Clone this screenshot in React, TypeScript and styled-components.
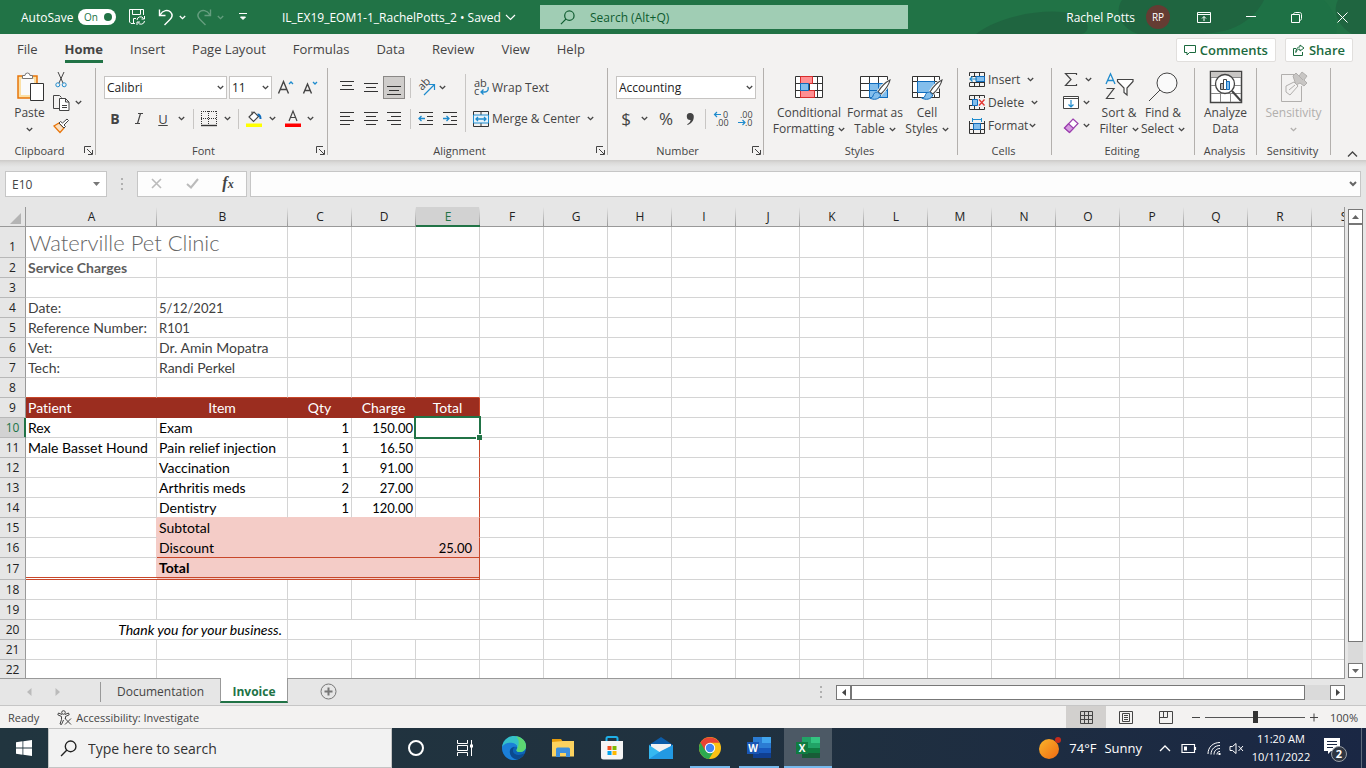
import React, { useEffect, useState } from "react";
import styled, { createGlobalStyle, css } from "styled-components";

const GREEN = "#217346";
const INK = "#444444";
const BLUE = "#1e8bcd";

const Global = createGlobalStyle`
  *, *::before, *::after { box-sizing: border-box; }
  body { margin: 0; font-family: "Open Sans", "Noto Sans", sans-serif; font-size: 12px; color: ${INK}; }
  button, input, select { font: inherit; color: inherit; margin: 0; }
  button { background: none; border: 0; padding: 0; cursor: pointer; }
  svg { display: block; flex: none; overflow: visible; }
`;

const Frame = styled.div`
  display: flex;
  flex-direction: column;
  height: 100vh;
  background: #e6e6e6;
  overflow: hidden;
`;

/* ---------- title bar ---------- */
const TitleBar = styled.header`
  position: relative;
  display: flex;
  align-items: center;
  flex: none;
  height: 34px;
  background: ${GREEN};
  color: #fff;
`;
const TitleArt = styled.svg`
  position: absolute;
  top: 0;
  right: 0;
`;
const TitleLeft = styled.div`
  display: flex;
  align-items: center;
  flex: 0 0 540px;
  padding-left: 21px;
`;
const AutoSave = styled.label`
  display: flex;
  align-items: center;
  width: 107px;
  justify-content: space-between;
  padding-right: 12px;
`;
const Switch = styled.span`
  position: relative;
  display: flex;
  align-items: center;
  width: 38px;
  height: 16px;
  padding-left: 6px;
  border-radius: 8px;
  background: #fff;
  color: ${GREEN};
  font-size: 10px;
  &::after {
    content: "";
    position: absolute;
    right: 4px;
    width: 8px;
    height: 8px;
    border-radius: 50%;
    background: ${GREEN};
  }
  input { position: absolute; inset: 0; opacity: 0; margin: 0; width: 100%; height: 100%; }
`;
const TitleBtn = styled.button<{ $w: number; $dim?: boolean }>`
  position: relative;
  display: flex;
  align-items: center;
  justify-content: center;
  width: ${(p) => p.$w}px;
  height: 34px;
  opacity: ${(p) => (p.$dim ? 0.3 : 1)};
`;
const DocTitle = styled.button`
  display: flex;
  align-items: center;
  gap: 4px;
  margin-left: 31px;
  white-space: nowrap;
`;
const SearchBox = styled.label`
  display: flex;
  align-items: center;
  flex: 0 1 368px;
  gap: 15px;
  height: 24px;
  padding-left: 20px;
  background: #a0cdb4;
  color: #0f5c30;
  input { flex: 1; min-width: 0; border: 0; background: none; outline: 0; padding: 0; }
  input::placeholder { color: #0f5c30; opacity: 1; }
`;
const TitleRight = styled.div`
  position: relative;
  display: flex;
  align-items: center;
  margin-left: auto;
`;
const Avatar = styled.span`
  display: flex;
  align-items: center;
  justify-content: center;
  width: 24px;
  height: 24px;
  margin: 0 11px;
  border-radius: 50%;
  background: #653c33;
  font-size: 10px;
`;

/* ---------- ribbon tabs ---------- */
const TabBar = styled.nav`
  display: flex;
  align-items: center;
  flex: none;
  height: 32px;
  padding: 0 13px 0 17px;
  gap: 27px;
  background: #f3f2f1;
  font-size: 13px;
`;
const RibbonTab = styled.button<{ $on?: boolean }>`
  height: 26px;
  padding-top: 1px;
  border-bottom: 3px solid ${(p) => (p.$on ? GREEN : "transparent")};
  font-weight: ${(p) => (p.$on ? 700 : 400)};
  white-space: nowrap;
`;
const TabActions = styled.div`
  display: flex;
  gap: 9px;
  margin-left: auto;
`;
const ActionBtn = styled.button`
  display: flex;
  align-items: center;
  gap: 4px;
  height: 24px;
  padding: 0 7px;
  border: 1px solid #e1dfdd;
  border-radius: 2px;
  background: #fff;
  color: #1b6a3e;
  font-weight: 600;
`;

/* ---------- ribbon ---------- */
const Ribbon = styled.section`
  display: flex;
  flex: none;
  height: 94px;
  background: #f3f2f1;
`;
const Group = styled.section<{ $w: number }>`
  position: relative;
  display: flex;
  flex-direction: column;
  flex: 0 0 ${(p) => p.$w}px;
  &::after {
    content: "";
    position: absolute;
    right: 0;
    top: 2px;
    bottom: 5px;
    width: 1px;
    background: #b3b0ad;
  }
`;
const GroupBody = styled.div<{ $pl?: number }>`
  display: flex;
  flex: 1;
  padding-left: ${(p) => p.$pl ?? 0}px;
`;
const GroupFoot = styled.footer`
  display: flex;
  align-items: center;
  height: 18px;
  padding: 0 3px 2px 0;
  font-size: 11px;
  span { flex: 1; text-align: center; }
`;
const Launcher = styled.button`
  width: 14px;
  height: 12px;
  display: flex;
  align-items: center;
  justify-content: flex-end;
`;
const Rows = styled.div`
  display: flex;
  flex-direction: column;
  gap: 8px;
  padding-top: 10px;
`;
const Row = styled.div`
  display: flex;
  align-items: center;
  height: 23px;
`;
const SmallStack = styled.div<{ $w?: number }>`
  display: flex;
  flex-direction: column;
  padding-top: 2px;
  width: ${(p) => (p.$w ? p.$w + "px" : "auto")};
`;
const Tool = styled.button<{ $w: number; $on?: boolean; $fs?: number }>`
  display: flex;
  align-items: center;
  justify-content: center;
  flex: none;
  width: ${(p) => p.$w}px;
  height: 23px;
  font-size: ${(p) => p.$fs ?? 14}px;
  ${(p) => p.$on && css`background: #cfcdcb; border: 1px solid #8a8886;`}
`;
const TextTool = styled.button`
  display: flex;
  align-items: center;
  gap: 3px;
  height: 23px;
  white-space: nowrap;
`;
const Spacer = styled.span<{ $w: number }>`
  flex: 0 0 ${(p) => p.$w}px;
`;
const Sep = styled.span<{ $m?: number; $r?: number; $tall?: boolean }>`
  flex: 0 0 1px;
  height: ${(p) => (p.$tall ? 58 : 20)}px;
  margin: ${(p) => (p.$tall ? "8px" : "0")} ${(p) => p.$r ?? p.$m ?? 3}px 0 ${(p) => p.$m ?? 3}px;
  background: #c8c6c4;
`;
const BigBtn = styled.button<{ $w: number; $off?: boolean }>`
  display: flex;
  flex-direction: column;
  align-items: center;
  flex: none;
  width: ${(p) => p.$w}px;
  color: ${(p) => (p.$off ? "#b1afad" : INK)};
  line-height: 16px;
`;
const BigIcon = styled.span`
  display: flex;
  align-items: center;
  justify-content: center;
  height: 34px;
  margin: 4px 0 1px;
`;
const BigLine = styled.span`
  display: flex;
  align-items: center;
  gap: 4px;
  height: 16px;
  white-space: nowrap;
`;
const Drop = styled.span<{ $w: number }>`
  position: relative;
  display: block;
  flex: none;
  width: ${(p) => p.$w}px;
  height: 23px;
  margin-right: 2px;
  select {
    appearance: none;
    width: 100%;
    height: 100%;
    padding: 0 14px 0 2px;
    border: 1px solid #c6c4c2;
    border-radius: 0;
    background: #fff;
    color: #222;
    outline: 0;
  }
  svg { position: absolute; right: 3px; top: 9px; pointer-events: none; }
`;
const Collapse = styled.button`
  align-self: flex-end;
  margin: 0 8px 2px auto;
`;

/* ---------- formula bar ---------- */
const FormulaBar = styled.section`
  display: flex;
  flex: none;
  height: 47px;
  padding: 11px 5px 10px;
  background: linear-gradient(#cccac8 0, #dcdbda 3px, #e6e6e6 7px);
`;
const NameBox = styled.div`
  display: flex;
  align-items: center;
  width: 102px;
  padding-right: 6px;
  border: 1px solid #c6c6c6;
  background: #fff;
  input { flex: 1; min-width: 0; border: 0; padding: 0 0 0 6px; outline: 0; background: none; }
`;
const Dots = styled.span`
  display: flex;
  flex-direction: column;
  justify-content: center;
  gap: 3px;
  width: 30px;
  align-items: center;
  i { width: 2px; height: 2px; background: #b0b0b0; }
`;
const FxBox = styled.div`
  display: flex;
  width: 110px;
  border: 1px solid #c6c6c6;
  background: #fdfdfd;
  margin-right: 3px;
  em { font: italic 600 16px/20px "Liberation Serif", serif; }
  small { font-size: 12px; }
`;
const FormulaInput = styled.div`
  display: flex;
  align-items: center;
  flex: 1;
  padding-right: 3px;
  border: 1px solid #c6c6c6;
  background: #fdfdfd;
  input { flex: 1; min-width: 0; border: 0; outline: 0; background: none; padding: 0 4px; }
`;

/* ---------- sheet ---------- */
const Sheet = styled.main`
  display: flex;
  flex: 1 1 0;
  min-height: 0;
`;
const GridWrap = styled.div`
  flex: 1;
  min-width: 0;
  overflow: hidden;
  background: #fff;
  border-right: 1px solid #999;
`;
const Grid = styled.table`
  table-layout: fixed;
  width: 100%;
  border-collapse: separate;
  border-spacing: 0;
  background: #fff;
  font-family: Lato, "Open Sans", sans-serif;
  font-size: 14px;
  font-variant-ligatures: none;
  line-height: 18px;
  color: #000;
`;
const Col = styled.col<{ $w: number }>`
  width: ${(p) => p.$w}px;
`;
const ColHead = styled.th<{ $on?: boolean }>`
  height: 20px;
  padding: 0;
  background: linear-gradient(#e6e6e6, #999) right / 1px 100% no-repeat, ${(p) => (p.$on ? "#d2d2d2" : "#e6e6e6")};
  border-bottom: 1px solid ${(p) => (p.$on ? GREEN : "#999")};
  box-shadow: ${(p) => (p.$on ? `inset 0 -1px ${GREEN}` : "none")};
  color: ${(p) => (p.$on ? GREEN : "#222")};
  font: 12px/18px "Open Sans", sans-serif;
`;
const RowHead = styled.th<{ $on?: boolean; $h: number }>`
  height: ${(p) => p.$h}px;
  padding: 0 0 ${(p) => (p.$h > 20 ? 1 : 0)}px;
  vertical-align: bottom;
  background: ${(p) => (p.$on ? "#d2d2d2" : "#e6e6e6")};
  border-right: 1px solid ${(p) => (p.$on ? GREEN : "#999")};
  border-bottom: 1px solid #b8b8b8;
  box-shadow: ${(p) => (p.$on ? `inset -1px 0 ${GREEN}` : "none")};
  color: ${(p) => (p.$on ? GREEN : "#222")};
  font: 12px/18px "Open Sans", sans-serif;
`;
const Corner = styled.th`
  padding: 0;
  background: #e6e6e6;
  border-right: 1px solid #999;
  border-bottom: 1px solid #999;
  svg { margin: 3px 3px 0 auto; }
`;
type CellStyle = {
  $bg?: string;
  $fg?: string;
  $al?: string;
  $r?: string;
  $b?: string;
  $bold?: boolean;
  $it?: boolean;
  $num?: boolean;
  $pad?: number;
  $title?: boolean;
};
const Cell = styled.td<CellStyle>`
  position: relative;
  padding: 0 ${(p) => p.$pad ?? 2}px 0 2px;
  vertical-align: bottom;
  white-space: nowrap;
  text-align: ${(p) => p.$al ?? "left"};
  color: ${(p) => p.$fg ?? "#000"};
  background: ${(p) => p.$bg ?? "#fff"};
  border-right: ${(p) => (p.$r === "none" ? "0" : `1px solid ${p.$r ?? "#d4d4d4"}`)};
  border-bottom: ${(p) => p.$b ?? "1px solid #d4d4d4"};
  font-weight: ${(p) => (p.$bold ? 700 : 400)};
  font-style: ${(p) => (p.$it ? "italic" : "normal")};
  ${(p) => p.$num && css`font-size: 13px;`}
  ${(p) => p.$title && css`font-size: 22px; font-weight: 300; line-height: 28px; padding-left: 3px;`}
`;
const Selection = styled.span`
  position: absolute;
  inset: -2px;
  z-index: 1;
  border: 2px solid ${GREEN};
  &::after {
    content: "";
    position: absolute;
    right: -3px;
    bottom: -3px;
    width: 6px;
    height: 6px;
    background: ${GREEN};
    border: solid #fff;
    border-width: 1px 0 0 1px;
  }
`;
const VScroll = styled.div`
  display: flex;
  flex-direction: column;
  flex: none;
  width: 15px;
  margin: 2px 3px 0 3px;
  background: #dadada;
`;
const ScrollBtn = styled.button`
  display: flex;
  align-items: center;
  justify-content: center;
  flex: 0 0 15px;
  height: 15px;
  border: 1px solid #777;
  background: #fff;
`;
const Thumb = styled.span<{ $f: number }>`
  flex: ${(p) => p.$f} 1 0;
  border: 1px solid #777;
  background: #fff;
`;
const Track = styled.span<{ $f: number }>`
  flex: ${(p) => p.$f} 1 0;
`;

/* ---------- sheet tabs ---------- */
const SheetBar = styled.footer`
  display: flex;
  flex: none;
  height: 28px;
  border-bottom: 1px solid #c6c6c6;
  background: linear-gradient(#999, #999) 0 0 / calc(100% - 21px) 1px no-repeat, #e6e6e6;
`;
const SheetNav = styled.div`
  display: flex;
  align-items: center;
  width: 101px;
  height: 20px;
  margin-top: 4px;
  padding-left: 27px;
  gap: 23px;
  border-right: 1px solid #999;
`;
const SheetTab = styled.button<{ $on?: boolean; $w: number }>`
  width: ${(p) => p.$w}px;
  height: 25px;
  ${(p) =>
    p.$on
      ? css`background: #fff; border-left: 1px solid #999; border-right: 1px solid #999; border-bottom: 2px solid ${GREEN}; color: ${GREEN}; font-weight: 700; padding-top: 3px;`
      : css`padding-top: 1px;`}
`;
const AddSheet = styled.button`
  margin: 0 0 0 32px;
`;
const HScroll = styled.div`
  display: flex;
  width: 509px;
  height: 15px;
  margin: 7px 21px 0 0;
  background: #dadada;
`;

/* ---------- status bar ---------- */
const StatusBar = styled.footer`
  display: flex;
  align-items: center;
  flex: none;
  height: 22px;
  padding: 0 8px;
  background: #f3f2f1;
  font-size: 11px;
`;
const StatusItem = styled.button`
  display: flex;
  align-items: center;
  gap: 4px;
  margin-left: 18px;
`;
const ViewBtn = styled.button<{ $on?: boolean }>`
  display: flex;
  align-items: center;
  justify-content: center;
  width: 40px;
  height: 22px;
  background: ${(p) => (p.$on ? "#d2d0ce" : "none")};
`;
const Zoom = styled.label`
  display: flex;
  align-items: center;
  gap: 5px;
  margin-left: 6px;
  input {
    appearance: none;
    width: 100px;
    height: 12px;
    background: linear-gradient(#555, #555) 0 50% / 100% 1px no-repeat;
  }
  input::-webkit-slider-thumb {
    appearance: none;
    width: 5px;
    height: 12px;
    background: #333;
  }
`;
const Percent = styled.span`
  width: 40px;
  text-align: right;
`;

/* ---------- taskbar ---------- */
const Taskbar = styled.footer`
  display: flex;
  flex: none;
  height: 40px;
  background: linear-gradient(90deg, #21353f, #20313f 55%, #1a2744);
  color: #fff;
`;
const Start = styled.button`
  display: flex;
  align-items: center;
  justify-content: center;
  width: 48px;
`;
const TaskSearch = styled.label`
  display: flex;
  align-items: center;
  gap: 11px;
  width: 344px;
  padding-left: 11px;
  border: 1px solid #c4c4c4;
  background: #f2f2f2;
  color: #222;
  font-size: 14px;
  input { flex: 1; min-width: 0; border: 0; outline: 0; background: none; padding: 0; }
  input::placeholder { color: #333; opacity: 1; }
`;
const TaskBtn = styled.button<{ $line?: number; $on?: boolean }>`
  display: flex;
  align-items: center;
  justify-content: center;
  width: 48px;
  margin-right: 1px;
  background: ${(p) => (p.$line ? `linear-gradient(#76b9ed, #76b9ed) 50% 100% / ${p.$line}px 2px no-repeat` : "none")}
    ${(p) => (p.$on ? ", #4c5965" : "")};
`;
const Tray = styled.div`
  display: flex;
  align-items: center;
  margin-left: auto;
`;
const Weather = styled.button`
  display: flex;
  align-items: center;
  gap: 8px;
  margin-right: 17px;
  font-size: 13px;
`;
const TrayBtn = styled.button<{ $w: number }>`
  display: flex;
  align-items: center;
  justify-content: center;
  width: ${(p) => p.$w}px;
  height: 40px;
`;
const Clock = styled.button`
  width: 60px;
  font-size: 11px;
  line-height: 18px;
  white-space: nowrap;
`;
const ShowDesktop = styled.button`
  width: 5px;
  height: 40px;
  border-left: 1px solid #5f6b7c;
`;

/* ---------- icons ---------- */
const Ico = ({ w, h, children, ...rest }: { w: number; h: number; children: React.ReactNode } & React.SVGProps<SVGSVGElement>) => (
  <svg width={w} height={h} viewBox={`0 0 ${w} ${h}`} fill="none" stroke="#444" aria-hidden="true" {...rest}>
    {children}
  </svg>
);
const Chev = ({ c = "#444" }: { c?: string }) => (
  <svg width={7} height={5} viewBox="0 0 7 5" fill="none" stroke={c} strokeWidth={1.3} aria-hidden="true">
    <path d="M.8 1 3.5 3.7 6.2 1" />
  </svg>
);
const Lines = ({ xs }: { xs: [number, number, number][] }) => (
  <Ico w={16} h={16} stroke="#333">
    {xs.map(([y, a, b]) => (
      <path key={y} d={`M${a} ${y + 0.5}H${b}`} />
    ))}
  </Ico>
);
const Brush = () => (
  <g>
    <path d="M30 7c-4 2-9 7-12 12l3 2c4-4 8-9 9-14z" fill="#fff" stroke="#f3f2f1" strokeWidth="3" />
    <path d="M30 7c-4 2-9 7-12 12l3 2c4-4 8-9 9-14z" fill="#fff" stroke="#444" strokeWidth="1.1" />
    <path d="M17.500 19c-3 0-4 2-4.500 4-.5 1.500-2 2-3.500 1.800 4 2.700 10 1.700 11.200-2.800z" fill="#83beec" stroke="#0f6cbd" />
  </g>
);
const LaunchIcon = () => (
  <Ico w={9} h={9}>
    <path d="M.5 7V.5H7M3 3l5 5M8.500 4v4.500H4" />
  </Ico>
);
const Mag = ({ s = 16, c = "#444" }: { s?: number; c?: string }) => (
  <svg width={s} height={s} viewBox="0 0 16 16" fill="none" stroke={c} strokeWidth="1.300" aria-hidden="true">
    <circle cx="10" cy="6" r="5" />
    <path d="M6.500 9.500 1 15" />
  </svg>
);
const OfficeTile = ({ l, a, b, c, d, e }: { l: string; a: string; b: string; c: string; d: string; e: string }) => (
  <svg width="26" height="24" viewBox="0 0 26 24" aria-hidden="true">
    <path d="M7 1h9v6H7z" fill={b} />
    <path d="M16 1h9v6h-9z" fill={a} />
    <path d="M7 7h18v5H7z" fill={b} />
    <path d="M7 12h18v5H7z" fill={c} />
    <path d="M7 17h18v5H7z" fill={d} />
    <path d="M1 6h12v12H1z" fill={e} />
    <text x="7" y="15.500" textAnchor="middle" fontSize="10" fontWeight="700" fontFamily="Open Sans, sans-serif" fill="#fff">{l}</text>
  </svg>
);

const Foot = ({ label, launch }: { label: string; launch?: boolean }) => (
  <GroupFoot>
    <span>{label}</span>
    {launch && (
      <Launcher aria-label={`${label} settings`}>
        <LaunchIcon />
      </Launcher>
    )}
  </GroupFoot>
);

/* ---------- sheet data ---------- */
const colName = (i: number): string => (i < 26 ? "" : colName(Math.floor(i / 26) - 1)) + String.fromCharCode(65 + (i % 26));
const RUST = "#c8472a";
const PINK = "#f4ccc7";
const DARK = "#9b2d1f";
const VALUES: Record<string, string> = {
  A1: "Waterville Pet Clinic", A2: "Service Charges",
  A4: "Date:", B4: "5/12/2021", A5: "Reference Number:", B5: "R101",
  A6: "Vet:", B6: "Dr. Amin Mopatra", A7: "Tech:", B7: "Randi Perkel",
  A9: "Patient", B9: "Item", C9: "Qty", D9: "Charge", E9: "Total",
  A10: "Rex", B10: "Exam", C10: "1", D10: "150.00",
  A11: "Male Basset Hound", B11: "Pain relief injection", C11: "1", D11: "16.50",
  B12: "Vaccination", C12: "1", D12: "91.00",
  B13: "Arthritis meds", C13: "2", D13: "27.00",
  B14: "Dentistry", C14: "1", D14: "120.00",
  B15: "Subtotal", B16: "Discount", E16: "25.00", B17: "Total",
  A20: "Thank you for your business.",
};
const SPANS: Record<string, number> = { A1: 2, B1: 0, A20: 2, B20: 0, C20: 3, D20: 0, E20: 0 };

const look = (c: number, r: number): CellStyle => {
  const s: CellStyle = {};
  if (r === 1 && c === 0) return { $fg: "#666", $title: true };
  if (r === 2) { s.$fg = "#5e5e5e"; s.$bold = true; }
  if (r >= 4 && r <= 7) s.$fg = "#404040";
  if (r <= 5 && r >= 4 && c === 1) s.$num = true;
  if (c > 4) return s;
  if (r === 8) s.$b = `1px solid ${RUST}`;
  if (r === 9) {
    s.$bg = DARK; s.$fg = "#fff"; s.$r = DARK; s.$b = `1px solid ${DARK}`;
    s.$al = c === 0 ? "left" : "center";
  }
  if (r >= 10 && r <= 14 && c >= 2) { s.$al = "right"; s.$num = true; }
  if (r === 14 && c >= 1) s.$b = `1px solid ${PINK}`;
  if (r >= 15 && r <= 17) {
    s.$r = "none";
    if (c === 0) s.$bg = `linear-gradient(${PINK}, ${PINK}) right / 1px 100% no-repeat, #fff`;
    else {
      s.$bg = PINK;
      s.$b = `1px solid ${r === 16 ? RUST : PINK}`;
    }
    if (c === 4) { s.$al = "right"; s.$pad = 7; s.$num = true; }
  }
  if (r === 17) { s.$b = `3px double ${RUST}`; s.$bold = true; }
  if (r >= 9 && r <= 17 && c === 4) s.$r = RUST;
  if (r === 20 && c === 0) { s.$it = true; s.$al = "right"; s.$pad = 5; }
  return s;
};

/* Only the rows and columns that fit the window are drawn. */
const measure = () => ({
  rows: Math.max(20, Math.ceil((window.innerHeight - 330) / 20)),
  cols: Math.max(6, Math.ceil((window.innerWidth - 310) / 64) + 2),
});

function SheetGrid() {
  const [size, setSize] = useState(measure);
  useEffect(() => {
    const on = () => setSize(measure());
    window.addEventListener("resize", on);
    return () => window.removeEventListener("resize", on);
  }, []);
  const cols = Array.from({ length: size.cols }, (_, i) => colName(i));
  return (
    <Grid>
      <colgroup>
        <Col $w={26} />
        {cols.map((c, i) => (
          <Col key={c} $w={i < 2 ? 131 : 64} />
        ))}
      </colgroup>
      <thead>
        <tr>
          <Corner>
            <Ico w={13} h={13} stroke="none"><path d="M12 1v11H1z" fill="#b4b4b4" /></Ico>
          </Corner>
          {cols.map((c) => (
            <ColHead key={c} scope="col" $on={c === "E"}>{c}</ColHead>
          ))}
        </tr>
      </thead>
      <tbody>
        {Array.from({ length: size.rows }, (_, i) => i + 1).map((r) => (
          <tr key={r}>
            <RowHead scope="row" $on={r === 10} $h={r === 1 ? 31 : r === 17 ? 22 : 20}>{r}</RowHead>
            {cols.map((c, ci) => {
              const span = SPANS[c + r] ?? 1;
              if (span === 0) return null;
              return (
                <Cell key={c} colSpan={span} {...look(ci, r)}>
                  {VALUES[c + r]}
                  {c === "E" && r === 10 && <Selection />}
                </Cell>
              );
            })}
          </tr>
        ))}
      </tbody>
    </Grid>
  );
}

export default function App() {
  return (
    <Frame>
      <Global />
      <TitleBar>
        <TitleArt width="420" height="34" viewBox="0 0 420 34" aria-hidden="true">
          <path d="M30 34C60 10 130 4 140 22c4 6 0 12-6 12zM176 0h150c-2 12-14 22-30 26-20 6-30 8-44 8h-60C170 26 170 8 176 0z" fill="#1f6540" />
          <path d="M268 34c20-4 40-14 50-34h60c10 10 14 24 12 34z" fill="#1e7145" />
          <path d="M392 0h28v34h-14c-14-8-20-22-14-34z" fill="#1f6540" />
        </TitleArt>
        <TitleLeft>
          <AutoSave>
            AutoSave
            <Switch>On<input type="checkbox" defaultChecked /></Switch>
          </AutoSave>
          <TitleBtn $w={18} aria-label="Save">
            <Ico w={18} h={18} stroke="#fff">
              <path d="M7 15.500H3L1.500 14V1.500h14V7M4.500 1.500v5h8v-5M5.500 15.500v-5H8" />
              <path d="M9 12a3.500 3.500 0 0 1 6.500-1.500M16.500 8v3h-3M16.500 13a3.500 3.500 0 0 1-6.500 1.500M9 17v-3h3" />
            </Ico>
          </TitleBtn>
          <Spacer $w={10} />
          <TitleBtn $w={20} aria-label="Undo">
            <Ico w={18} h={18} stroke="#fff" strokeWidth="1.400">
              <path d="M2.500 1.500v6h6M3 7c3-5 8-5.500 10.500-3 2.500 2.700 1.500 5.500-.5 7.500L7.500 17" />
            </Ico>
          </TitleBtn>
          <TitleBtn $w={13} aria-label="Undo list"><Chev c="#fff" /></TitleBtn>
          <Spacer $w={5} />
          <TitleBtn $w={20} $dim aria-label="Redo">
            <Ico w={18} h={18} stroke="#fff" strokeWidth="1.400">
              <path d="M15.500 1.500v6h-6M15 7c-3-5-8-5.500-10.500-3C2 6.700 3 9.500 5 11.500L10.500 17" />
            </Ico>
          </TitleBtn>
          <TitleBtn $w={13} $dim aria-label="Redo list"><Chev c="#fff" /></TitleBtn>
          <Spacer $w={8} />
          <TitleBtn $w={16} aria-label="Customize toolbar">
            <Ico w={8} h={8} stroke="#fff"><path d="M0 .5h8M1.500 4 4 6.500 6.500 4z" fill="#fff" /></Ico>
          </TitleBtn>
          <DocTitle>
            <span>IL_EX19_EOM1-1_RachelPotts_2 • Saved</span>
            <Ico w={11} h={7} stroke="#fff" strokeWidth="1.200"><path d="M1 1l4.500 4.500L10 1" /></Ico>
          </DocTitle>
        </TitleLeft>
        <SearchBox>
          <Mag s={15} c="#0f5c30" />
          <input placeholder="Search (Alt+Q)" aria-label="Search" />
        </SearchBox>
        <TitleRight>
          Rachel Potts
          <Avatar>RP</Avatar>
          <TitleBtn $w={46} aria-label="Ribbon display options">
            <Ico w={14} h={11} stroke="#fff"><path d="M.5.5h13v10H.5zM.5 2.500h13M7 9V4.500M5 6.500l2-2 2 2" /></Ico>
          </TitleBtn>
          <Spacer $w={12} />
          <TitleBtn $w={23} aria-label="Minimize"><Ico w={10} h={4} stroke="#fff"><path d="M0 1.500h10" /></Ico></TitleBtn>
          <Spacer $w={23} />
          <TitleBtn $w={23} aria-label="Restore">
            <Ico w={11} h={11} stroke="#fff"><path d="M.5 2.500h8v8h-8zM2.500 2.500c0-1.200.8-2 2-2h4c1.200 0 2 .8 2 2v4c0 1.200-.8 2-2 2" /></Ico>
          </TitleBtn>
          <Spacer $w={23} />
          <TitleBtn $w={23} aria-label="Close"><Ico w={11} h={11} stroke="#fff"><path d="M.5.5l10 10M10.500.5l-10 10" /></Ico></TitleBtn>
          <Spacer $w={12} />
        </TitleRight>
      </TitleBar>

      <TabBar>
        {["File", "Home", "Insert", "Page Layout", "Formulas", "Data", "Review", "View", "Help"].map((t) => (
          <RibbonTab key={t} $on={t === "Home"}>{t}</RibbonTab>
        ))}
        <TabActions>
          <ActionBtn>
            <Ico w={12} h={12} stroke="#1b6a3e"><path d="M.5 1.500h11v7h-6L3 11V8.500H.5z" /></Ico>
            Comments
          </ActionBtn>
          <ActionBtn>
            <Ico w={12} h={12} stroke="#1b6a3e"><path d="M3 4.500H.5v7h9V8M7 1l4 3-4 3V5.200C5 5 3.500 6 2.800 8.500 2.800 5 4.500 3 7 2.800z" /></Ico>
            Share
          </ActionBtn>
        </TabActions>
      </TabBar>

      <Ribbon>
        <Group $w={96}>
          <GroupBody $pl={7}>
            <BigBtn $w={45}>
              <BigIcon>
                <Ico w={28} h={32}>
                  <path d="M2 5h19v22H2z" fill="#fbe0a6" stroke="#e8750a" strokeWidth="1.500" />
                  <path d="M5 8h13v16H5z" fill="#fafafa" stroke="none" />
                  <path d="M6.500 7.500v-3h2.500a2.500 2.500 0 0 1 5 0h2.500v3z" fill="#fff" stroke="#777" />
                  <path d="M14.500 12.500h13v17h-13z" fill="#fff" stroke="#333" />
                </Ico>
              </BigIcon>
              <BigLine>Paste</BigLine>
              <BigLine><Chev /></BigLine>
            </BigBtn>
            <SmallStack>
              <Row>
                <Tool $w={18} aria-label="Cut">
                  <Ico w={12} h={17}>
                    <path d="M3 1l5 11M9 1 4 12" />
                    <circle cx="2.800" cy="13.800" r="2" stroke={BLUE} /><circle cx="9.200" cy="13.800" r="2" stroke={BLUE} />
                  </Ico>
                </Tool>
              </Row>
              <Row>
                <Tool $w={18} aria-label="Copy">
                  <Ico w={17} h={16}>
                    <path d="M6 13.500H.5V.5h6l2 2" />
                    <path d="M6.500 3.500h6l3.500 3.500v8.500H6.500zM12.500 3.500V7H16M9 10.500h5M9 12.500h5" fill="#fff" />
                  </Ico>
                </Tool>
                <Spacer $w={5} />
                <Chev />
              </Row>
              <Row>
                <Tool $w={18} aria-label="Format painter">
                  <Ico w={17} h={16}>
                    <path d="M1 8l6 6.500 4-4.500-5-5z" fill="#fbe0c0" stroke="#e8750a" strokeWidth="1.200" />
                    <path d="M6 5l5 5 1.500-1.500L11 7l4.500-4.500L14 1 9.500 5 7.500 3.500z" fill="#fff" />
                  </Ico>
                </Tool>
              </Row>
            </SmallStack>
          </GroupBody>
          <Foot label="Clipboard" launch />
        </Group>

        <Group $w={232}>
          <GroupBody $pl={7}>
            <Rows>
              <Row>
                <Spacer $w={1} />
                <Drop $w={123}>
                  <select aria-label="Font"><option>Calibri</option></select>
                  <Chev />
                </Drop>
                <Drop $w={43}>
                  <select aria-label="Font size"><option>11</option></select>
                  <Chev />
                </Drop>
                <Spacer $w={2} />
                <Tool $w={18} aria-label="Increase font size">
                  <Ico w={17} h={16}>
                    <path d="M1.500 13.500 6.500 1.500l5 12M3.300 9.500h6.400" strokeWidth="1.400" /><path d="M12 4 14 2l2 2" stroke={BLUE} strokeWidth="1.300" />
                  </Ico>
                </Tool>
                <Spacer $w={7} />
                <Tool $w={18} aria-label="Decrease font size">
                  <Ico w={17} h={16}>
                    <path d="M1.500 13.500 5.500 4l4 9.500M3 10.500h5" strokeWidth="1.400" /><path d="M11 2l2 2 2-2" stroke={BLUE} strokeWidth="1.300" />
                  </Ico>
                </Tool>
              </Row>
              <Row>
                <Tool $w={24}><b>B</b></Tool>
                <Tool $w={24} aria-label="Italic"><Ico w={8} h={11}><path d="M3 .5h5M0 10.500h5M5.500.5l-3 10" strokeWidth="1.200" /></Ico></Tool>
                <Tool $w={24} $fs={13}><u>U</u></Tool>
                <Tool $w={12} aria-label="Underline styles"><Chev /></Tool>
                <Sep $m={6} $r={0} />
                <Tool $w={30} aria-label="Borders">
                  <Ico w={16} h={16} stroke="#333">
                    <path d="M.5 0v14M15.500 0v14M7.500 0v14M0 .5h16M0 7.500h16" strokeDasharray="1 1" />
                    <path d="M0 14.500h16" strokeWidth="1.400" />
                  </Ico>
                </Tool>
                <Tool $w={6} aria-label="Border styles"><Chev /></Tool>
                <Sep $m={8} $r={1} />
                <Tool $w={28} aria-label="Fill color">
                  <Ico w={16} h={17}>
                    <path d="M3 7l5-5 4.500 4.500-5 5zM6 5V1.500" fill="#fff" strokeWidth="1.100" />
                    <path d="M11.500 4.500c2 0 3 1.500 3 4.500" stroke="#0f6cbd" strokeWidth="2" />
                    <path d="M0 13.500h16v3.500H0z" fill="#ff0" stroke="none" />
                  </Ico>
                </Tool>
                <Tool $w={8} aria-label="Fill colors"><Chev /></Tool>
                <Spacer $w={3} />
                <Tool $w={28} aria-label="Font color">
                  <Ico w={16} h={17}>
                    <path d="M4 11 8 1l4 10M5.300 7.500h5.400" strokeWidth="1.200" />
                    <path d="M0 13.500h16v3.500H0z" fill="red" stroke="none" />
                  </Ico>
                </Tool>
                <Tool $w={6} aria-label="Font colors"><Chev /></Tool>
              </Row>
            </Rows>
          </GroupBody>
          <Foot label="Font" launch />
        </Group>

        <Group $w={280}>
          <GroupBody $pl={7}>
            <Rows>
              <Row>
                <Tool $w={24} aria-label="Top align"><Lines xs={[[1, 1, 15], [5, 3, 13], [9, 1, 15]]} /></Tool>
                <Tool $w={24} aria-label="Middle align"><Lines xs={[[3, 1, 15], [7, 3, 13], [11, 1, 15]]} /></Tool>
                <Tool $w={22} $on aria-label="Bottom align"><Lines xs={[[6, 1, 15], [10, 3, 13], [14, 1, 15]]} /></Tool>
                <Sep $m={5} $r={3} />
                <Tool $w={24} aria-label="Orientation">
                  <Ico w={17} h={17}>
                    <text x="0" y="0" transform="translate(4 12) rotate(-45)" fontSize="11" fill="#444" stroke="none">ab</text>
                    <path d="M6 16 16 6M11 5.500h5.500V11" stroke={BLUE} strokeWidth="1.200" />
                  </Ico>
                </Tool>
                <Tool $w={8} aria-label="Orientation options"><Chev /></Tool>
              </Row>
              <Row>
                <Tool $w={24} aria-label="Align left"><Lines xs={[[1, 1, 15], [5, 1, 11], [9, 1, 15], [13, 1, 11]]} /></Tool>
                <Tool $w={24} aria-label="Center"><Lines xs={[[1, 1, 15], [5, 3, 13], [9, 1, 15], [13, 3, 13]]} /></Tool>
                <Tool $w={22} aria-label="Align right"><Lines xs={[[1, 1, 15], [5, 5, 15], [9, 1, 15], [13, 5, 15]]} /></Tool>
                <Sep $m={5} $r={3} />
                <Tool $w={24} aria-label="Decrease indent">
                  <Ico w={16} h={16} stroke="#333"><path d="M1 1.500h14M9 5.500h6M9 9.500h6M1 13.500h14" /><path d="M7 7.500H1M3.500 5 1 7.500 3.500 10" stroke={BLUE} strokeWidth="1.300" /></Ico>
                </Tool>
                <Tool $w={24} aria-label="Increase indent">
                  <Ico w={16} h={16} stroke="#333"><path d="M1 1.500h14M9 5.500h6M9 9.500h6M1 13.500h14" /><path d="M1 7.500h6M4.500 5 7 7.500 4.500 10" stroke={BLUE} strokeWidth="1.300" /></Ico>
                </Tool>
              </Row>
            </Rows>
            <Sep $tall $m={3} $r={7} />
            <Rows>
              <Row>
                <TextTool>
                  <Ico w={16} h={17}>
                    <text x="1" y="8" fontSize="11" fill="#444" stroke="none">ab</text>
                    <text x="1" y="16" fontSize="11" fill="#444" stroke="none">c</text>
                    <path d="M15 8c1 3-1 5-3 5H8M10.500 10.500 8 13l2.500 2.500" stroke={BLUE} strokeWidth="1.300" />
                  </Ico>
                  Wrap Text
                </TextTool>
              </Row>
              <Row>
                <TextTool>
                  <Ico w={16} h={16} stroke="#333">
                    <path d="M.5.5h15v15H.5zM8 .5V4M8 12v3.500" />
                    <path d="M.5 4h15v8H.5z" fill="#e6f3fb" stroke={BLUE} />
                    <path d="M3 8h10M5 6 3 8l2 2M11 6l2 2-2 2" stroke={BLUE} strokeWidth="1.300" />
                  </Ico>
                  Merge &amp; Center
                </TextTool>
                <Spacer $w={6} />
                <Tool $w={8} aria-label="Merge options"><Chev /></Tool>
              </Row>
            </Rows>
          </GroupBody>
          <Foot label="Alignment" launch />
        </Group>

        <Group $w={156}>
          <GroupBody $pl={6}>
            <Rows>
              <Row>
                <Spacer $w={2} />
                <Drop $w={140}>
                  <select aria-label="Number format"><option>Accounting</option></select>
                  <Chev />
                </Drop>
              </Row>
              <Row>
                <Tool $w={24} $fs={17}>$</Tool>
                <Tool $w={12} aria-label="Currency options"><Chev /></Tool>
                <Spacer $w={4} />
                <Tool $w={24} $fs={17}>%</Tool>
                <Tool $w={24} aria-label="Comma style">
                  <Ico w={9} h={14} stroke="none"><path d="M4 1a3.500 3.500 0 0 1 3.800 3.800C7.800 9 5 12 1.500 13l-.3-.8C3.500 11 4.500 9.500 4.600 8A3.500 3.500 0 0 1 4 1z" fill="#444" /></Ico>
                </Tool>
                <Sep $m={3} $r={3} />
                <Tool $w={24} aria-label="Increase decimal">
                  <Ico w={17} h={17}>
                    <text x="10" y="8" fontSize="9" fill="#444" stroke="none">0</text>
                    <text x="3" y="16" fontSize="9" fill="#444" stroke="none">.00</text>
                    <path d="M8 4.500H1.500M4 2 1.500 4.500 4 7" stroke={BLUE} strokeWidth="1.200" />
                  </Ico>
                </Tool>
                <Tool $w={24} aria-label="Decrease decimal">
                  <Ico w={17} h={17}>
                    <text x="3" y="8" fontSize="9" fill="#444" stroke="none">.00</text>
                    <text x="8" y="16" fontSize="9" fill="#444" stroke="none">.0</text>
                    <path d="M1 12.500h7M5.500 10 8 12.500 5.500 15" stroke={BLUE} strokeWidth="1.200" />
                  </Ico>
                </Tool>
              </Row>
            </Rows>
          </GroupBody>
          <Foot label="Number" launch />
        </Group>

        <Group $w={194}>
          <GroupBody $pl={9}>
            <BigBtn $w={72}>
              <BigIcon>
                <Ico w={28} h={31} stroke="#333">
                  <path d="M.5 4.500h27v21H.5zM.5 11.500h27M.5 18.500h27M5.500 4.500v21M14.500 4.500v21M22.500 4.500v21" fill="#fff" />
                  <path d="M5.500 4.500h12v7h-12zM5.500 18.500h14v7h-14z" fill="#ff8f92" stroke="#d92c2c" />
                  <path d="M5.500 11.500h8v7h-8z" fill="#83beec" stroke="#0f6cbd" />
                </Ico>
              </BigIcon>
              <BigLine>Conditional</BigLine>
              <BigLine>Formatting <Chev /></BigLine>
            </BigBtn>
            <BigBtn $w={60}>
              <BigIcon>
                <Ico w={30} h={29} stroke="#333">
                  <path d="M.5 3.500h27v21H.5zM.5 10.500h27M.5 17.500h27M9.500 3.500v21M18.500 3.500v21" fill="#fff" />
                  <path d="M9.500 10.500h18v14h-18zM9.500 17.500h18M18.500 10.500v14" fill="#83beec" stroke="#0f6cbd" />
                  <Brush />
                </Ico>
              </BigIcon>
              <BigLine>Format as</BigLine>
              <BigLine>Table <Chev /></BigLine>
            </BigBtn>
            <BigBtn $w={44}>
              <BigIcon>
                <Ico w={30} h={29} stroke="#333">
                  <path d="M.5 3.500h27v21H.5zM.5 8.500h27M.5 19.500h27M5.500 3.500v21M22.500 3.500v21" fill="#fff" />
                  <path d="M5.500 8.500h17v11h-17z" fill="#83beec" stroke="#0f6cbd" />
                  <Brush />
                </Ico>
              </BigIcon>
              <BigLine>Cell</BigLine>
              <BigLine>Styles <Chev /></BigLine>
            </BigBtn>
          </GroupBody>
          <Foot label="Styles" />
        </Group>

        <Group $w={94}>
          <GroupBody $pl={11}>
            <SmallStack>
              <Row>
                <TextTool>
                  <Ico w={16} h={15} stroke="#333">
                    <path d="M.5 4V.5h15v14H.5V11M.5 10.500h15M5.500.5v4M10.500.5v14M5.500 10.500v4M2 4.500h13" />
                    <path d="M7 4.500h8.500v5H7z" fill="#83beec" stroke="#0f6cbd" />
                    <path d="M8 7H1M3.500 4.500 1 7l2.500 2.500" stroke={BLUE} strokeWidth="1.200" />
                  </Ico>
                  Insert
                </TextTool>
                <Spacer $w={7} />
                <Chev />
              </Row>
              <Row>
                <TextTool>
                  <Ico w={16} h={15} stroke="#333">
                    <path d="M.5 4V.5h15V3M.5 11v3.500h15V12M5.500.5v14M10.500.5V3M10.500 12v3M0 4.500h6M0 10.500h6" />
                    <path d="M3.500 4.500h5v6h-5z" fill="#83beec" stroke="#0f6cbd" />
                    <path d="M10 4.500l5.500 6M15.500 4.500l-5.500 6" stroke="#e3342f" strokeWidth="1.300" />
                  </Ico>
                  Delete
                </TextTool>
                <Spacer $w={7} />
                <Chev />
              </Row>
              <Row>
                <TextTool>
                  <Ico w={16} h={16} stroke="#333">
                    <path d="M.5 3v12.500h15V3M.5 5.500h15M.5 11.500h15M4.500 5v10.500M11.500 5v10.500" />
                    <path d="M4.500 5.500h7v6h-7z" fill="#83beec" stroke="#0f6cbd" />
                    <path d="M3.500 0v4M12.500 0v4M3.500 1.500h9" stroke={BLUE} />
                  </Ico>
                  Format
                </TextTool>
                <Spacer $w={1} />
                <Chev />
              </Row>
            </SmallStack>
          </GroupBody>
          <Foot label="Cells" />
        </Group>

        <Group $w={143}>
          <GroupBody $pl={9}>
            <SmallStack $w={37}>
              <Row>
                <Tool $w={20} aria-label="AutoSum"><Ico w={14} h={15}><path d="M12.500 3V1.500h-11L7 7.500l-5.500 6h11V12" strokeWidth="1.200" /></Ico></Tool>
                <Spacer $w={4} /><Chev />
              </Row>
              <Row>
                <Tool $w={20} aria-label="Fill">
                  <Ico w={16} h={15}><path d="M.5 1.500h15v12H.5zM.5 3.500h15" fill="#fff" /><path d="M8 5v7M5.500 9.500 8 12l2.500-2.500" stroke={BLUE} strokeWidth="1.200" /></Ico>
                </Tool>
                <Spacer $w={2} /><Chev />
              </Row>
              <Row>
                <Tool $w={20} aria-label="Clear">
                  <Ico w={16} h={16} stroke="#9b3fae" strokeWidth="1.200"><path d="M10 1l5 4.500-8.500 9L1.500 10z" fill="#fff" /><path d="M5.500 5.800l5 4.500-4 4.200L1.500 10z" fill="#d69be0" /></Ico>
                </Tool>
                <Spacer $w={2} /><Chev />
              </Row>
            </SmallStack>
            <BigBtn $w={42}>
              <BigIcon>
                <Ico w={29} h={28}>
                  <path d="M1 11 5.500.8 10 11M2.500 7.500h6" stroke={BLUE} strokeWidth="1.300" />
                  <path d="M1.500 15.500H9L1.500 25.500H9.500" strokeWidth="1.200" />
                  <path d="M12.500 6.500h15.500v2l-6 6.500v7l-3-2.500V15l-6.500-6.500z" fill="#fff" strokeWidth="1.200" />
                </Ico>
              </BigIcon>
              <BigLine>Sort &amp;</BigLine>
              <BigLine>Filter <Chev /></BigLine>
            </BigBtn>
            <BigBtn $w={46}>
              <BigIcon>
                <Ico w={30} h={30}><circle cx="19" cy="11" r="10" fill="#fafafa" /><path d="M12 18 1 29" /></Ico>
              </BigIcon>
              <BigLine>Find &amp;</BigLine>
              <BigLine>Select <Chev /></BigLine>
            </BigBtn>
          </GroupBody>
          <Foot label="Editing" />
        </Group>

        <Group $w={62}>
          <GroupBody>
            <BigBtn $w={61}>
              <BigIcon>
                <Ico w={32} h={32}>
                  <path d="M.5.5h31v31H.5z" fill="#fff" strokeWidth="1.500" />
                  <path d="M1 1h30v5H1z" fill="#c8c6c4" stroke="none" />
                  <path d="M1 6.500h30M1 14.500h8M1 22.500h30M10.500 22v9M20.500 22v9M24 14.500h7" stroke="#888" />
                  <circle cx="15" cy="13" r="9.500" fill="#fff" strokeWidth="1.300" />
                  <path d="M10.500 12.500h3v6h-3z" fill="#bbb" /><path d="M13.500 8.500h3v10h-3z" fill="#fff" stroke="#444" /><path d="M16.500 10.500h3v8h-3z" fill="#83beec" stroke="#0f6cbd" />
                  <path d="M22 20l9 10" strokeWidth="2" />
                </Ico>
              </BigIcon>
              <BigLine>Analyze</BigLine>
              <BigLine>Data</BigLine>
            </BigBtn>
          </GroupBody>
          <Foot label="Analysis" />
        </Group>

        <Group $w={74}>
          <GroupBody>
            <BigBtn $w={73} $off>
              <BigIcon>
                <Ico w={28} h={32} stroke="#b1afad">
                  <path d="M21.500 15v15.500H1.500v-27h14" />
                  <path d="M13 5l3-3 3 3 3-4 5 4-3 4 3 3-3 3-4-3-4 2z" fill="#c8c6c4" />
                  <path d="M19 5l4 4" />
                  <path d="M6 15l8-4 4 4-8 9-4-3zM9 19l6-5" fill="#f3f2f1" />
                </Ico>
              </BigIcon>
              <BigLine>Sensitivity</BigLine>
              <BigLine><Chev c="#b1afad" /></BigLine>
            </BigBtn>
          </GroupBody>
          <Foot label="Sensitivity" />
        </Group>
        <Collapse aria-label="Collapse ribbon"><Ico w={11} h={8}><path d="M1 6.500 5.500 2 10 6.500" strokeWidth="1.300" /></Ico></Collapse>
      </Ribbon>

      <FormulaBar>
        <NameBox>
          <input defaultValue="E10" aria-label="Name box" />
          <button aria-label="Named ranges"><Ico w={7} h={5} stroke="none"><path d="M0 0h7L3.500 4z" fill="#777" /></Ico></button>
        </NameBox>
        <Dots><i /><i /><i /></Dots>
        <FxBox>
          <Tool $w={36} aria-label="Cancel"><Ico w={11} h={11} stroke="#bbb" strokeWidth="1.600"><path d="M1 1l9 9M10 1l-9 9" /></Ico></Tool>
          <Tool $w={36} aria-label="Enter"><Ico w={13} h={11} stroke="#bbb" strokeWidth="2"><path d="M1 6l4 3.500L12 1" /></Ico></Tool>
          <Tool $w={36} aria-label="Insert function"><em>f<small>x</small></em></Tool>
        </FxBox>
        <FormulaInput>
          <input aria-label="Formula" />
          <Ico w={8} h={6} stroke="#666" strokeWidth="2"><path d="M1 1l3 3 3-3" /></Ico>
        </FormulaInput>
      </FormulaBar>

      <Sheet>
        <GridWrap><SheetGrid /></GridWrap>
        <VScroll>
          <ScrollBtn aria-label="Scroll up"><Ico w={7} h={4} stroke="none"><path d="M0 4h7L3.500 0z" fill="#666" /></Ico></ScrollBtn>
          <Thumb $f={418} />
          <Track $f={21} />
          <ScrollBtn aria-label="Scroll down"><Ico w={7} h={4} stroke="none"><path d="M0 0h7L3.500 4z" fill="#666" /></Ico></ScrollBtn>
        </VScroll>
      </Sheet>

      <SheetBar>
        <SheetNav>
          <Ico w={5} h={8} stroke="none"><path d="M4.500 0v8L0 4z" fill="#bbb" /></Ico>
          <Ico w={5} h={8} stroke="none"><path d="M.5 0v8L5 4z" fill="#bbb" /></Ico>
        </SheetNav>
        <SheetTab $w={119}>Documentation</SheetTab>
        <SheetTab $w={68} $on>Invoice</SheetTab>
        <AddSheet aria-label="New sheet">
          <Ico w={17} h={17} stroke="#777"><circle cx="8.500" cy="8.500" r="7.500" /><path d="M8.500 4.500v8M4.500 8.500h8" strokeWidth="2" /></Ico>
        </AddSheet>
        <Track $f={1} />
        <Dots><i /><i /><i /></Dots>
        <HScroll>
          <ScrollBtn aria-label="Scroll left"><Ico w={4} h={7} stroke="none"><path d="M4 0v7L0 3.500z" fill="#444" /></Ico></ScrollBtn>
          <Thumb $f={454} />
          <Track $f={25} />
          <ScrollBtn aria-label="Scroll right"><Ico w={4} h={7} stroke="none"><path d="M0 0v7l4-3.500z" fill="#444" /></Ico></ScrollBtn>
        </HScroll>
      </SheetBar>

      <StatusBar>
        Ready
        <StatusItem>
          <Ico w={15} h={15}>
            <circle cx="6.500" cy="2.500" r="1.800" />
            <path d="M5 4.500 1.500 3 .8 4.800 4.500 6.500v3L3 14l1.500.5L6.500 10M8 4.500 11.500 3l.7 1.800L8.500 6.500V9M8 8.500l6 6M14 8.500l-6 6" />
          </Ico>
          Accessibility: Investigate
        </StatusItem>
        <Track $f={1} />
        <ViewBtn $on aria-label="Normal view"><Ico w={13} h={13}><path d="M.5.5h12v12H.5zM4.500.5v12M8.500.5v12M.5 4.500h12M.5 8.500h12" /></Ico></ViewBtn>
        <ViewBtn aria-label="Page layout view"><Ico w={14} h={13}><path d="M.5.5h13v12H.5zM3.500 2.500h7v8h-7zM5 4.500h4M5 6.500h4M5 8.500h4" /></Ico></ViewBtn>
        <ViewBtn aria-label="Page break view"><Ico w={14} h={13}><path d="M.5.5h13v12H.5zM.5 6.500h8v-6M4.500.5v6" /></Ico></ViewBtn>
        <Zoom>
          <Ico w={8} h={9}><path d="M0 4.500h8" /></Ico>
          <input type="range" min="0" max="200" defaultValue="100" aria-label="Zoom" />
          <Ico w={8} h={9}><path d="M0 4.500h8M4 .5v8" /></Ico>
        </Zoom>
        <Percent>100%</Percent>
      </StatusBar>

      <Taskbar>
        <Start aria-label="Start">
          <Ico w={16} h={16} stroke="none"><path d="M0 2.200 6.500 1.300v6.300H0zM7.300 1.200 16 0v7.600H7.300zM0 8.400h6.500v6.300L0 13.800zM7.300 8.400H16V16l-8.700-1.200z" fill="#fff" /></Ico>
        </Start>
        <TaskSearch>
          <Mag s={17} c="#222" />
          <input placeholder="Type here to search" aria-label="Search Windows" />
        </TaskSearch>
        <TaskBtn aria-label="Cortana"><Ico w={16} h={16} stroke="#fff" strokeWidth="2"><circle cx="8" cy="8" r="7" /></Ico></TaskBtn>
        <TaskBtn aria-label="Task view">
          <Ico w={17} h={16} stroke="#fff"><path d="M.5 0v3.500h10V0M.5 5.500h10v5H.5zM.5 16v-3.500h10V16M14.500 0v16" /><path d="M13 4.500h3v3h-3z" fill="#fff" stroke="none" /></Ico>
        </TaskBtn>
        <TaskBtn aria-label="Edge">
          <svg width="24" height="24" viewBox="0 0 24 24">
            <circle cx="12" cy="12" r="12" fill="#0c64b8" />
            <path d="M0 11C1 4 6 0 12 0c7 0 12 5 12 10 0 4-3 6-6.500 6-3 0-3.500-1.500-2.500-3 1-3-1-5-4-5-5 0-9 1-11 3z" fill="#35c1c8" />
            <path d="M14 .2C20 1 24 5 24 10c0 4-3 6-6.500 6-3 0-3.500-1.500-2.500-3C17 9 18 4 14 .2z" fill="#5cd672" />
            <path d="M0 11c2-4 7-5 11-4 2 .5 4 2 4 4-5-1-8 2-7 6 .8 4 4 6.500 8 6.300C6 26 0 19 0 11z" fill="#1b7fd8" />
            <path d="M15 11.500c-3-1-4.500 1-4 4 1 3.500 6 4.500 11.500 2-1 2-3.500 4.500-6.500 5.700-4 0-7-2-8-6-.8-4 2-7 7-5.700z" fill="#0b4a8f" />
          </svg>
        </TaskBtn>
        <TaskBtn aria-label="File Explorer">
          <svg width="22" height="20" viewBox="0 0 22 20">
            <path d="M0 1h9l2 3H0z" fill="#e69c0c" /><path d="M0 4l11-1h11v15.500H0z" fill="#fbd25f" />
            <path d="M4 19v-8a1.500 1.500 0 0 1 1.500-1.500h11A1.500 1.500 0 0 1 18 11v8h-4v-4H8v4z" fill="#3d8fdc" />
          </svg>
        </TaskBtn>
        <TaskBtn aria-label="Microsoft Store">
          <svg width="24" height="24" viewBox="0 0 24 24">
            <path d="M6.500 6V2.500A1.500 1.500 0 0 1 8 1h8a1.500 1.500 0 0 1 1.500 1.500V6" fill="none" stroke="#1fb0e8" strokeWidth="2" />
            <path d="M1 5h22v16a2.500 2.500 0 0 1-2.500 2.500h-17A2.500 2.500 0 0 1 1 21z" fill="#f5f5f5" />
            <path d="M7.500 10h4v4h-4z" fill="#f25022" /><path d="M12.500 10h4v4h-4z" fill="#7fba00" /><path d="M7.500 15h4v4h-4z" fill="#00a4ef" /><path d="M12.500 15h4v4h-4z" fill="#ffb900" />
          </svg>
        </TaskBtn>
        <TaskBtn aria-label="Mail">
          <svg width="24" height="24" viewBox="0 0 24 24">
            <path d="M0 9 12 1l12 8v3H0z" fill="#0c5ca8" /><path d="M2 8h20v8H2z" fill="#f2f2f2" /><path d="M0 9l12 8L24 9v14H0z" fill="#35b8f1" /><path d="M0 23 12 15 24 9v14z" fill="#2299e3" />
          </svg>
        </TaskBtn>
        <TaskBtn $line={40} aria-label="Chrome">
          <svg width="22" height="22" viewBox="0 0 22 22">
            <circle cx="11" cy="11" r="11" fill="#fbc116" />
            <path d="M11 11 1.500 5.500A11 11 0 0 0 10 22l5.300-8.500z" fill="#2da94f" />
            <path d="M1.500 5.500A11 11 0 0 1 20.500 5.800H11L6.200 13.500z" fill="#e94335" />
            <circle cx="11" cy="11" r="5.200" fill="#fff" /><circle cx="11" cy="11" r="4.200" fill="#4285f4" />
          </svg>
        </TaskBtn>
        <TaskBtn $line={40} aria-label="Word"><OfficeTile l="W" a="#41a5ee" b="#2b7cd3" c="#185abd" d="#103f91" e="#1a56b4" /></TaskBtn>
        <TaskBtn $line={48} $on aria-label="Excel"><OfficeTile l="X" a="#33c481" b="#21a366" c="#107c41" d="#185c37" e="#107c41" /></TaskBtn>

        <Tray>
          <Weather>
            <svg width="22" height="24" viewBox="0 0 22 24">
              <defs><linearGradient id="sun" x1="0" y1="0" x2="1" y2="1"><stop offset="0" stopColor="#f9b52b" /><stop offset="1" stopColor="#f06a12" /></linearGradient></defs>
              <circle cx="10" cy="13" r="10" fill="url(#sun)" /><circle cx="19" cy="4" r="3" fill="#c42b1c" />
            </svg>
            <span>74°F</span><span>Sunny</span>
          </Weather>
          <TrayBtn $w={12} aria-label="Hidden icons"><Ico w={12} h={8} stroke="#fff" strokeWidth="1.300"><path d="M1 7l5-5 5 5" /></Ico></TrayBtn>
          <TrayBtn $w={36} aria-label="Battery">
            <Ico w={16} h={11} stroke="#fff" strokeWidth="1.200"><path d="M1 1.500h12.500v8H1zM14.500 4v3" /><path d="M3 3.500h3v4H3z" fill="#fff" stroke="none" /></Ico>
          </TrayBtn>
          <TrayBtn $w={14} aria-label="Network">
            <Ico w={14} h={14} stroke="#fff"><path d="M1 13C1 6 6 1.500 13 1.500M4 13.500C4 8 8 4.500 13 4.500M7 13.500c0-3.500 2.500-6 6-6M10 13.500c0-2 1-3 3-3" /><path d="M11.500 12h2v2h-2z" fill="#fff" stroke="none" /></Ico>
          </TrayBtn>
          <TrayBtn $w={30} aria-label="Volume">
            <Ico w={15} h={13} stroke="#fff"><path d="M1 4.500h2.500L7 1.500v10L3.500 8.500H1zM9.500 4l4.500 5M14 4 9.500 9" /></Ico>
          </TrayBtn>
          <Clock>11:20 AM<br />10/11/2022</Clock>
          <TrayBtn $w={50} aria-label="2 notifications">
            <svg width="24" height="26" viewBox="0 0 24 26">
              <path d="M0 3h16v13H7l-3 3v-3H0z" fill="#fff" /><path d="M3 6.500h10M3 9.500h10M3 12.500h6" stroke="#1b2843" />
              <circle cx="15" cy="19" r="7.500" fill="#2f3642" stroke="#9aa0a8" />
              <text x="15" y="23" textAnchor="middle" fontSize="11" fontWeight="700" fill="#fff">2</text>
            </svg>
          </TrayBtn>
          <ShowDesktop aria-label="Show desktop" />
        </Tray>
      </Taskbar>
    </Frame>
  );
}
